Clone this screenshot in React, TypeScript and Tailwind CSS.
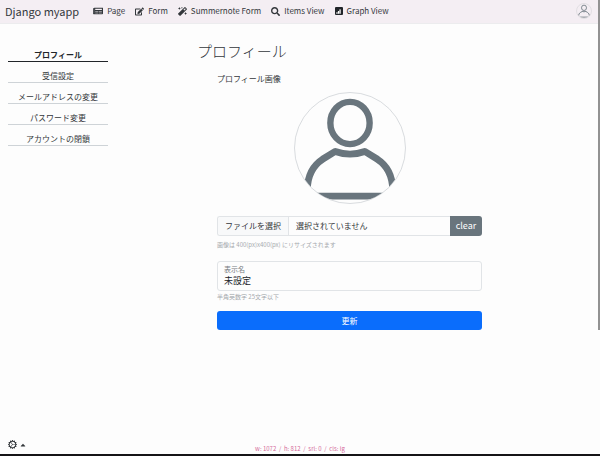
import { FaEdit, FaMagic, FaNewspaper, FaSearch, FaCaretUp } from "react-icons/fa";
import { BsBarChartFill, BsGearWideConnected } from "react-icons/bs";

const navItems = [
  { label: "Page", icon: <FaNewspaper className="size-[10px]" /> },
  { label: "Form", icon: <FaEdit className="size-[9px]" /> },
  { label: "Summernote Form", icon: <FaMagic className="size-[9px]" /> },
  { label: "Items View", icon: <FaSearch className="size-[9px]" /> },
  {
    label: "Graph View",
    icon: (
      <span className="flex size-[8px] items-center justify-center rounded-[1px] bg-[#212529]">
        <BsBarChartFill className="size-[5px] text-white" />
      </span>
    ),
  },
];

const sideItems = ["プロフィール", "受信設定", "メールアドレスの変更", "パスワード変更", "アカウントの閉鎖"];

function Person({ className }: { className: string }) {
  return (
    <svg viewBox="0 0 112 112" className={className} fill="none" stroke="#69757d" aria-hidden="true">
      <ellipse cx="56" cy="30.500" rx="20" ry="21.500" strokeWidth="6.5" />
      <path
        d="M12.500 98 C13 83 18 74 28 67.500 L41 59.500 Q56 65 71 59.500 L84 67.500 C94 74 99 83 99.500 98"
        strokeWidth="7"
        strokeLinejoin="round"
      />
      <path d="M22 105 H90" strokeWidth="7" />
    </svg>
  );
}

export default function App() {
  return (
    <div className="relative flex h-screen flex-col overflow-hidden bg-[#fdfdfd] font-['Noto_Sans_CJK_JP',sans-serif] text-[9px] leading-3 text-[#33373b]">
      <header className="flex h-6 shrink-0 items-center border-b border-[#ececee] bg-[#f4eef3] pr-2 pb-px pl-[5px]">
        <a href="#" className="mr-[14px] text-[11px] whitespace-nowrap">Django myapp</a>
        <nav className="flex items-center gap-[10px] text-[8px]">
          {navItems.map((item) => (
            <a key={item.label} href="#" className="flex items-center gap-1 whitespace-nowrap">
              {item.icon}
              {item.label}
            </a>
          ))}
        </nav>
        <button type="button" aria-label="Account" className="ml-auto size-4 overflow-hidden rounded-full border border-[#e2dfe3]">
          <Person className="size-full" />
        </button>
      </header>

      <div className="flex min-h-0 flex-1 items-start">
        <nav className="mt-[25px] ml-2 flex w-[100px] shrink-0 flex-col gap-2">
          {sideItems.map((item, i) => (
            <a
              key={item}
              href="#"
              className={
                i === 0
                  ? "border-b border-[#212529] text-center text-[8px] font-bold text-[#212529]"
                  : "border-b border-[#ced3d7] text-center text-[8px]"
              }
            >
              {item}
            </a>
          ))}
        </nav>

        <main className="mt-[17px] ml-[89px] w-[285px] text-[8px]">
          <h1 className="text-[15px] leading-5 font-light">プロフィール</h1>
          <form className="mt-3 ml-5">
            <label htmlFor="avatar" className="block">プロフィール画像</label>
            <div className="mx-auto mt-[7px] size-28 overflow-hidden rounded-full border border-[#d9dcdf]">
              <Person className="size-full" />
            </div>
            <div className="mt-3 flex h-5 text-[8px]">
              <input id="avatar" type="file" className="sr-only" />
              <label htmlFor="avatar" className="flex flex-1 items-center overflow-hidden rounded-l-[3px] border border-r-0 border-[#e1e4e7] whitespace-nowrap">
                <span className="flex h-full w-[71px] items-center justify-center border-r border-[#e1e4e7] bg-[#f8f9fa]">ファイルを選択</span>
                <span className="pl-[7px]">選択されていません</span>
              </label>
              <button type="button" className="w-8 rounded-r-[3px] bg-[#69757d] text-[9px] text-white">clear</button>
            </div>
            <p className="mt-[3px] text-[6px] text-[#a5a9ad]">画像は 400(px)x400(px) にリサイズされます</p>
            <div className="mt-[10px] flex h-[30px] flex-col rounded-[3px] border border-[#e1e4e7] px-[6px] pt-px">
              <label htmlFor="name" className="text-[7px] text-[#777c81]">表示名</label>
              <input id="name" defaultValue="未設定" className="h-3 w-full bg-transparent text-[9px] text-[#212529] outline-none" />
            </div>
            <p className="text-[6px] text-[#a5a9ad]">半角英数字 25文字以下</p>
            <button type="submit" className="mt-[8px] h-[19px] w-full rounded-[3px] bg-[#0a6dfc] text-white">更新</button>
          </form>
        </main>
      </div>

      <footer className="grid h-[22px] shrink-0 grid-cols-3 items-start border-b-2 border-[#151417] px-2">
        <button type="button" aria-label="Settings" className="mt-[6px] flex items-center gap-[2px]">
          <BsGearWideConnected className="size-[9px]" />
          <FaCaretUp className="size-[8px]" />
        </button>
        <p className="mt-[9px] text-center text-[6px] whitespace-pre text-[#d56b9c]">w: 1072  /  h: 812  /  srl: 0  /  cls: lg</p>
      </footer>

      <div className="absolute top-0 right-0 h-[330px] w-[2px] bg-[#929292]" />
    </div>
  );
}
